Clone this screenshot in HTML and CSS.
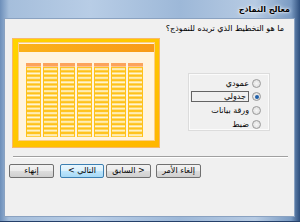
FILE: index.html
```html
<!DOCTYPE html>
<html lang="ar" dir="rtl">
<head>
<meta charset="utf-8">
<link rel="stylesheet" href="styles.css">
</head>
<body>
<div class="window">
  <div class="titlebar">معالج النماذج</div>
  <div class="client">
    <div class="question">ما هو التخطيط الذي تريده للنموذج؟</div>
    <div class="main">
      <div class="options">
        <div class="opt"><span class="radio"></span><span class="label">عمودي</span></div>
        <div class="opt"><span class="radio checked"></span><span class="label focus">جدولي</span></div>
        <div class="opt"><span class="radio"></span><span class="label">ورقة بيانات</span></div>
        <div class="opt"><span class="radio"></span><span class="label">ضبط</span></div>
      </div>
      <div class="preview">
        <svg width="148" height="110" viewBox="0 0 148 110" xmlns="http://www.w3.org/2000/svg">
          <defs>
            <linearGradient id="yel" x1="0" y1="0" x2="1" y2="1">
              <stop offset="0" stop-color="#ffd400"/>
              <stop offset="1" stop-color="#ffb600"/>
            </linearGradient>
            <linearGradient id="hdr" x1="0" y1="0" x2="1" y2="0">
              <stop offset="0" stop-color="#fbb21a"/>
              <stop offset="1" stop-color="#f89a18"/>
            </linearGradient>
            <pattern id="rows" x="14" y="29" width="17" height="4.4" patternUnits="userSpaceOnUse">
              <rect x="0" y="0" width="15" height="4.4" fill="#ffc21a"/>
              <rect x="1" y="1.2" width="13" height="1.8" fill="#fff8dc"/>
            </pattern>
          </defs>
          <rect x="0" y="0" width="148" height="110" fill="#f9b86a"/>
          <rect x="1" y="1" width="146" height="108" fill="url(#yel)"/>
          <rect x="6" y="4" width="137" height="99" fill="#fbcf86"/>
          <rect x="7" y="5" width="135" height="97" fill="#fff4e0"/>
          <rect x="7" y="6" width="135" height="8" fill="url(#hdr)"/>
          <g fill="#fca35c">
            <rect x="14" y="25" width="15" height="3.6"/>
            <rect x="31" y="25" width="15" height="3.6"/>
            <rect x="48" y="25" width="15" height="3.6"/>
            <rect x="65" y="25" width="15" height="3.6"/>
            <rect x="82" y="25" width="15" height="3.6"/>
            <rect x="99" y="25" width="15" height="3.6"/>
            <rect x="116" y="25" width="15" height="3.6"/>
          </g>
          <rect x="14" y="29" width="117" height="70" fill="url(#rows)"/>
        </svg>
      </div>
    </div>
    <div class="sep"></div>
    <div class="buttons">
      <button class="btn btn-cancel">إلغاء الأمر</button>
      <button class="btn btn-back">&lt; السابق</button>
      <button class="btn btn-next">التالي &gt;</button>
      <button class="btn btn-finish">إنهاء</button>
    </div>
  </div>
</div>
</body>
</html>
```

FILE: styles.css
```css
html, body {
  margin: 0;
  padding: 0;
}
body {
  width: 300px;
  height: 222px;
  overflow: hidden;
  font-family: "DejaVu Sans", sans-serif;
  font-size: 8px;
  color: #000;
}
.window {
  width: 300px;
  height: 222px;
  box-sizing: border-box;
  display: flex;
  flex-direction: column;
  background: linear-gradient(90deg, #6d8fba 0%, #a5bedb 3%, #b8cde6 30%, #9db8d8 60%, #b7cbe3 85%, #7a9bc3 97%, #2e4f7d 100%);
  border-bottom: 1px solid #25406a;
}
.titlebar {
  height: 18px;
  line-height: 20px;
  padding-right: 10px;
  font-weight: bold;
  font-size: 8px;
  color: #000;
  text-shadow: 0 0 4px #fff, 0 0 2px #fff;
}
.client {
  flex: 1;
  margin: 0 5px 4px 4px;
  background: #f0f0f0;
  border: 1px solid #8aa2c1;
  display: flex;
  flex-direction: column;
}
.question {
  padding: 5px 10px 0 0;
  height: 13px;
  line-height: 10px;
}
.main {
  display: flex;
  align-items: flex-start;
  padding: 1px 24px 0 7px;
  gap: 28px;
  height: 118px;
}
.options {
  width: 82px;
  height: 58px;
  margin-top: 35px;
  border: 1px solid #dcdcdc;
  box-shadow: inset 0 0 0 1px #fbfbfb;
  display: flex;
  flex-direction: column;
  padding: 4px 8px 0 0;
  box-sizing: border-box;
  gap: 2px;
}
.opt {
  display: flex;
  align-items: center;
  height: 12px;
  gap: 3px;
}
.opt:nth-child(3) { margin-top: 1px; }
.opt:nth-child(4) { margin-top: 1px; }
.radio {
  width: 7px;
  height: 7px;
  border-radius: 50%;
  border: 1px solid #9a9a9a;
  background: radial-gradient(circle, #f6f6f6 0%, #d8d8d8 100%);
  position: relative;
  flex: none;
}
.radio.checked::after {
  content: "";
  position: absolute;
  left: 1.5px;
  top: 1.5px;
  width: 4px;
  height: 4px;
  border-radius: 50%;
  background: #1f5fa8;
}
.label {
  line-height: 10px;
}
.label.focus {
  width: 54px;
  height: 9px;
  border: 1px solid #646464;
  padding-right: 2px;
  box-sizing: content-box;
  line-height: 9px;
}
.preview {
  width: 148px;
  height: 110px;
}
.preview svg {
  display: block;
}
.sep {
  margin: 0 6px 0 8px;
  height: 0;
  border-top: 1px solid #a0a0a0;
  border-bottom: 1px solid #fff;
}
.buttons {
  display: flex;
  padding: 6px 93px 0 3px;
}
.btn {
  font-family: "DejaVu Sans", sans-serif;
  font-size: 8px;
  width: 45px;
  height: 14px;
  padding: 0;
  margin: 0;
  border: 1px solid #707070;
  border-radius: 2px;
  background: linear-gradient(#f2f2f2 0%, #ebebeb 50%, #dddddd 51%, #cfcfcf 100%);
  color: #000;
  line-height: 12px;
}
.btn-back { margin-right: 5px; }
.btn-next {
  margin-right: 2px;
  width: 44px;
  border-color: #3c7fb1;
  background: linear-gradient(#eaf6fd 0%, #d9f0fc 50%, #bee6fd 51%, #a7d9f5 100%);
}
.btn-finish {
  margin-right: 6px;
}
```
